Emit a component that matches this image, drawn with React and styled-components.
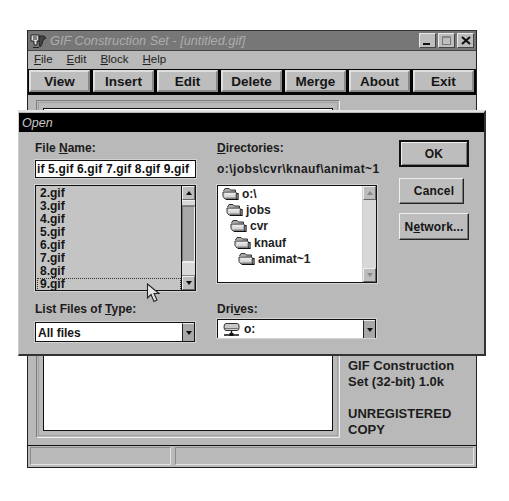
import React from 'react';
import styled, { createGlobalStyle } from 'styled-components';

const Global = createGlobalStyle`
  html, body { margin: 0; padding: 0; background: #fff; }
  body { width: 509px; height: 501px; overflow: hidden; font-family: "Liberation Sans", Arial, sans-serif; color: #101010; }
  #root { width: 509px; height: 501px; }
`;
const Page = styled.div`
  position: relative; width: 509px; height: 501px; padding: 30px 0 0 27px; box-sizing: border-box;
`;
const Win = styled.div`
  width: 450px; height: 438px; box-sizing: border-box; border: 1px solid #222; border-top-color: #333;
  background: #b9b9b9; display: flex; flex-direction: column;
`;
const TitleBar = styled.div`
  height: 20px; background: #777; display: flex; align-items: center; padding: 0 2px 0 2px; flex: none;
  border-bottom: 1px solid #444; box-sizing: border-box;
`;
const AppTitle = styled.span`
  font-style: italic; font-size: 12.75px; color: #adadad; margin-left: 3px; flex: 1;
`;
const CapGroup = styled.div`display: flex; gap: 2px;`;
const CapBtn = styled.div`
  width: 17px; height: 15px; background: #bdbdbd; display: flex; align-items: center; justify-content: center;
  border: 1px solid; border-color: #e8e8e8 #444 #444 #e8e8e8; box-sizing: border-box;
`;
const MenuBar = styled.div`
  height: 18px; display: flex; align-items: center; padding: 0 0 3px 6px; gap: 14px; font-size: 11.5px; flex: none; color: #222; box-sizing: border-box;
`;
const U = styled.span`text-decoration: underline; text-underline-offset: 1px;`;
const Toolbar = styled.div`
  height: 26px; background: #050505; display: flex; gap: 3px; padding: 1px 2px 3px 1px; box-sizing: border-box; flex: none;
`;
const ToolBtn = styled.div`
  flex: 1; background: #bdbdbd; display: flex; align-items: center; justify-content: center;
  font-weight: bold; font-size: 13.5px; color: #151515;
  border: 2px solid; border-color: #dedede #8a8a8a #8a8a8a #dedede;
`;
const Work = styled.div`
  flex: 1; display: flex; padding: 5px 0 0 8px; min-height: 0;
`;
const Frame = styled.div`
  width: 304px; height: 338px; box-sizing: border-box; padding: 7px 6px 6px 6px;
  border: 1px solid; border-color: #7d7d7d #efefef #efefef #7d7d7d;
  display: flex; outline: 1px solid #a2a2a2; outline-offset: -3px;
`;
const Canvas = styled.div`
  flex: 1; background: #fff; border: 1px solid #111;
`;
const Info = styled.div`
  font-weight: bold; font-size: 13px; line-height: 16px; padding: 258px 0 0 8px; color: #1c1c1c; width: 122px;
`;
const Gap = styled.div`height: 16px;`;
const StatusBar = styled.div`
  height: 22px; flex: none; border-top: 1px solid #111; display: flex; gap: 4px; padding: 1px 2px 2px 2px; box-sizing: border-box;
`;
const StatusCell = styled.div`
  flex: ${p => p.$grow}; border: 1px solid; border-color: #8a8a8a #e4e4e4 #e4e4e4 #8a8a8a;
`;

const Dialog = styled.div`
  position: absolute; left: 18px; top: 110px; width: 468px; height: 246px; box-sizing: border-box;
  background: #b9b9b9; border-top: 2px solid #e2e2e2; border-right: 2px solid #333; border-bottom: 2px solid #333; border-left: 1px solid #ccc;
  display: flex; flex-direction: column;
`;
const DlgTitle = styled.div`
  height: 19px; background: #000; color: #c8c8c8; font-style: italic; font-size: 12.5px; line-height: 20px; padding-left: 3px; flex: none; margin-top: 1px;
`;
const DlgBody = styled.div`
  flex: 1; display: grid; grid-template-columns: 161px 160px 70px; column-gap: 21px; padding: 9px 0 0 16px;
  position: relative;
`;
const Col = styled.div`display: flex; flex-direction: column;`;
const RightCol = styled(Col)`margin-left: 1px; margin-top: -1px;`;
const Label = styled.div`
  font-weight: bold; font-size: 12px; height: 14px; line-height: 14px; color: #1c1c1c; margin-bottom: ${p => p.$mb || 0}px;
  margin-top: ${p => p.$mt || 0}px;
`;
const PathText = styled(Label)`letter-spacing: .42px; white-space: nowrap;`;
const Input = styled.div`
  height: 18px; box-sizing: border-box; background: #fff; border: 1px solid #111; font-weight: bold; font-size: 12px;
  line-height: 17px; padding-left: 1px; white-space: nowrap; overflow: hidden; color: #111; outline: 1px solid #d4d4d4; letter-spacing: .15px;
`;
const ListBox = styled.div`
  height: ${p => p.$h}px; margin-top: ${p => p.$mt}px; box-sizing: border-box; border: 1.5px solid #111; display: flex;
  background: ${p => p.$bg}; outline: 1px solid #d4d4d4;
`;
const Items = styled.div`flex: 1; overflow: hidden; padding: 1px 0 0 4px; display: flex; flex-direction: column;`;
const Item = styled.div`
  font-weight: bold; font-size: 12px; height: 13px; line-height: 13px; color: #151515;
  margin-left: ${p => p.$focus ? -3 : 0}px; padding-left: ${p => p.$focus ? 3 : 0}px;
  ${p => p.$focus ? 'outline: 1px dotted #333; outline-offset: -1px; height: 13px;' : ''}
`;
const ScrollBar = styled.div`
  width: 13px; flex: none; display: flex; flex-direction: column; background: ${p => p.$bg}; border-left: 1px solid ${p => p.$line};
`;
const Arrow = styled.div`
  height: 14px; flex: none; background: #bdbdbd; display: flex; align-items: center; justify-content: center;
  border: 1px solid; border-color: #eee #666 #666 #eee; box-sizing: border-box;
`;
const Thumb = styled.div`
  flex: none; height: ${p => p.$h}px; background: ${p => p.$bg}; box-sizing: border-box; border-top: 1px solid #eee; border-bottom: 1px solid #888;
`;
const Track = styled.div`flex: 1; background: ${p => p.$bg}; ${p => p.$line ? 'border: 1px solid; border-color: #777 #eee #eee #777;' : ''}`;
const Tri = styled.div`
  width: 0; height: 0; border-left: 3.5px solid transparent; border-right: 3.5px solid transparent;
  ${p => p.$up ? `border-bottom: 4px solid ${p.$c};` : `border-top: 4px solid ${p.$c};`}
`;
const DirList = styled.div`flex: 1; display: flex; flex-direction: column; gap: 2.2px; padding: 1px 0 0 4px;`;
const DirRow = styled.div`
  display: flex; align-items: center; gap: 3px; height: 14px; padding-left: ${p => p.$d * 4}px;
  font-weight: bold; font-size: 12px; color: #222;
`;
const Combo = styled.div`
  height: ${p => p.$h}px; box-sizing: border-box; border: 1.5px solid #111; ${p => p.$noBottom ? 'border-bottom: 0;' : ''} background: #fff; display: flex; align-items: stretch;
  margin: ${p => p.$mt}px 1px 0 0; font-weight: bold; font-size: 12px; outline: 1px solid #d4d4d4;
`;
const ComboText = styled.div`flex: 1; display: flex; align-items: center; gap: 4px; padding: ${p => p.$pt || 0}px 0 0 ${p => p.$pl}px; color: #151515;`;
const ComboBtn = styled.div`
  width: 12px; background: #a8a8a8; display: flex; align-items: center; justify-content: center;
  border-left: 1px solid #222; border-top: 1px solid #eee; box-sizing: border-box;
`;
const Btn = styled.div`
  height: ${p => p.$h}px; width: ${p => p.$w || 70}px; margin-top: ${p => p.$mt}px; padding-left: ${p => p.$pl || 0}px; box-sizing: border-box; display: flex; align-items: center; justify-content: center;
  font-weight: bold; font-size: 12px; color: #151515; background: #bdbdbd; letter-spacing: .15px;
  border: 1px solid; border-color: #eee #222 #222 #eee; box-shadow: inset -1px -1px 0 #777;
  ${p => p.$def ? 'border: 2px solid #111; box-shadow: inset 1px 1px 0 #eee, inset -1px -1px 0 #777;' : ''}
`;
const Pointer = styled.svg`position: absolute; left: 146px; top: 283px;`;

const Folder = () => (
  <svg width="17" height="14" viewBox="0 0 17 14" fill="none">
    <path d="M1.5 4 L3 1.5 H7 L8.5 3 H13.5 V5" stroke="#333" fill="#aaa" />
    <path d="M1 5 H13.5 L14.5 6 V12 H3 L1 9.5 Z" fill="#d8d8d8" stroke="#333" />
    <path d="M3 7 H13" stroke="#f4f4f4" />
    <path d="M3.5 11 H14 V7" stroke="#777" />
    <path d="M15 6.5 H16 V12.5 H4" stroke="#111" strokeWidth="1.2" />
  </svg>
);
const Drive = () => (
  <svg width="17" height="15" viewBox="0 0 17 15" fill="none">
    <path d="M3 1.5 H14.5 Q16 1.5 16 4 V6 Q16 8.5 14.5 8.5 H3 Q1 8.5 1 5 Q1 1.5 3 1.5 Z" fill="#c8c8c8" stroke="#333" />
    <path d="M2 6.5 H15" stroke="#777" />
    <path d="M8.5 9 V12 M1 13 H16" stroke="#111" strokeWidth="1.4" />
    <rect x="6.5" y="11" width="4" height="3" fill="#111" />
  </svg>
);
const AppIcon = () => (
  <svg width="17" height="16" viewBox="0 0 17 16" fill="none">
    <path d="M1 2 H9 V8 H7 V12 H4 V8 H1 Z" fill="#ddd" stroke="#222" />
    <path d="M9 3 H14 L16 5 L13 7 L12 11 L10 14 L9 9 Z" fill="#444" stroke="#222" />
    <path d="M3 14.5 H9 M3 4 H7 M3 6 H7" stroke="#222" />
  </svg>
);
const Scroll = ({ list }) => list ? (
  <ScrollBar $bg="#bdbdbd" $line="#111">
    <Arrow><Tri $up $c="#111" /></Arrow>
    <Thumb $h={6} $bg="#d8d8d8" />
    <Track $bg="#a8a8a8" $line />
    <Thumb $h={14} $bg="#d8d8d8" />
    <Arrow><Tri $c="#111" /></Arrow>
  </ScrollBar>
) : (
  <ScrollBar $bg="#d8d8d8" $line="#d0d0d0">
    <Arrow><Tri $up $c="#888" /></Arrow>
    <Track $bg="#d8d8d8" />
    <Arrow><Tri $c="#888" /></Arrow>
  </ScrollBar>
);

const tools = ['View', 'Insert', 'Edit', 'Delete', 'Merge', 'About', 'Exit'];
const files = ['2.gif', '3.gif', '4.gif', '5.gif', '6.gif', '7.gif', '8.gif'];
const dirs = ['o:\\', 'jobs', 'cvr', 'knauf', 'animat~1'];

export default function App() {
  return (
    <Page>
      <Global />
      <Win>
        <TitleBar>
          <AppIcon />
          <AppTitle>GIF Construction Set - [untitled.gif]</AppTitle>
          <CapGroup>
            <CapBtn><svg width="11" height="11"><rect x="1" y="8" width="7" height="2" fill="#111" /></svg></CapBtn>
            <CapBtn><svg width="9" height="9"><rect x="0.5" y="0.5" width="8" height="8" fill="none" stroke="#777" /><rect x="0" y="0" width="9" height="2" fill="#888" /></svg></CapBtn>
            <CapBtn><svg width="10" height="9"><path d="M1 1 L9 8 M9 1 L1 8" stroke="#111" strokeWidth="2.2" /></svg></CapBtn>
          </CapGroup>
        </TitleBar>
        <MenuBar>
          <span><U>F</U>ile</span>
          <span><U>E</U>dit</span>
          <span><U>B</U>lock</span>
          <span><U>H</U>elp</span>
        </MenuBar>
        <Toolbar>
          {tools.map(t => <ToolBtn key={t}>{t}</ToolBtn>)}
        </Toolbar>
        <Work>
          <Frame><Canvas /></Frame>
          <Info>
            GIF Construction Set (32-bit) 1.0k
            <Gap />
            UNREGISTERED COPY
          </Info>
        </Work>
        <StatusBar>
          <StatusCell $grow={140} />
          <StatusCell $grow={300} />
        </StatusBar>
      </Win>
      <Dialog>
        <DlgTitle>Open</DlgTitle>
        <DlgBody>
          <Col>
            <Label $mb={5}>File <U>N</U>ame:</Label>
            <Input>if 5.gif 6.gif 7.gif 8.gif 9.gif</Input>
            <ListBox $h={106} $mt={7} $bg="#c4c4c4">
              <Items>
                {files.map(f => <Item key={f}>{f}</Item>)}
                <Item $focus>9.gif</Item>
              </Items>
              <Scroll list />
            </ListBox>
            <Label $mt={11}>List Files of <U>T</U>ype:</Label>
            <Combo $h={20} $mt={6}>
              <ComboText $pl={2} $pt={1}>All files</ComboText>
              <ComboBtn><Tri $c="#111" /></ComboBtn>
            </Combo>
          </Col>
          <Col>
            <Label><U>D</U>irectories:</Label>
            <PathText $mt={7} $mb={9}>o:\jobs\cvr\knauf\animat~1</PathText>
            <ListBox $h={98} $mt={0} $bg="#fff">
              <DirList>
                {dirs.map((d, i) => (
                  <DirRow key={d} $d={i}><Folder />{d}</DirRow>
                ))}
              </DirList>
              <Scroll />
            </ListBox>
            <Label $mt={19}>Dri<U>v</U>es:</Label>
            <Combo $h={19} $mt={3} $noBottom>
              <ComboText $pl={5}><Drive />o:</ComboText>
              <ComboBtn><Tri $c="#111" /></ComboBtn>
            </Combo>
          </Col>
          <RightCol>
            <Btn $h={27} $mt={0} $def>OK</Btn>
            <Btn $h={26} $mt={11} $w={65} $pl={5}>Cancel</Btn>
            <Btn $h={27} $mt={9}>N<U>e</U>twork...</Btn>
          </RightCol>
        </DlgBody>
      </Dialog>
      <Pointer width="15" height="20" viewBox="0 0 15 20">
        <path d="M1.5 1 V15 L5 11.5 L8 18.5 L11 17 L8 10.5 H13 Z" fill="#e6e6e6" stroke="#222" strokeWidth="1.1" />
      </Pointer>
    </Page>
  );
}
